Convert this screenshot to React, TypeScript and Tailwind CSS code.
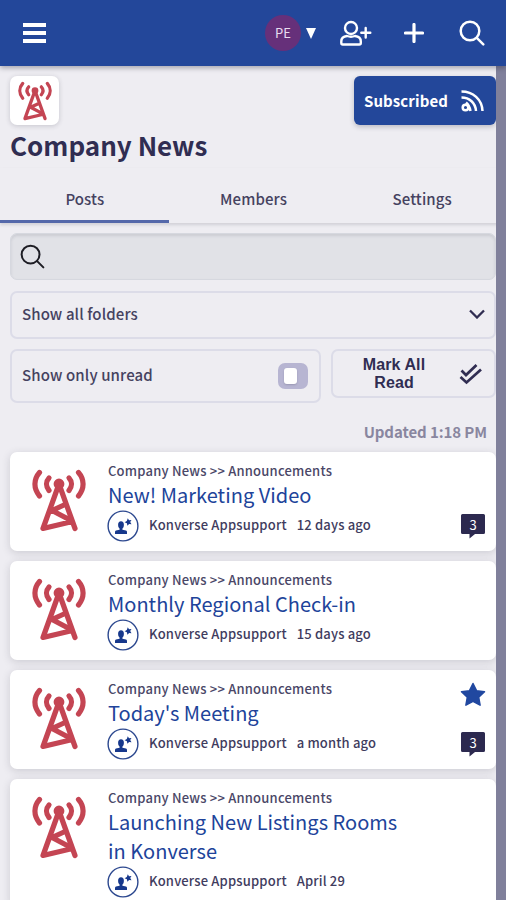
import React from "react";

type Post = {
  title: string[];
  date: string;
  starred?: boolean;
  comments?: number;
};

const posts: Post[] = [
  { title: ["New! Marketing Video"], date: "12 days ago", comments: 3 },
  { title: ["Monthly Regional Check-in"], date: "15 days ago" },
  { title: ["Today's Meeting"], date: "a month ago", starred: true, comments: 3 },
  { title: ["Launching New Listings Rooms", "in Konverse"], date: "April 29" },
];

function Tower({ className }: { className: string }) {
  return (
    <svg viewBox="0 0 54 63" className={className} fill="none" stroke="#c44553" strokeWidth="5.200" strokeLinecap="round" strokeLinejoin="round">
      <path d="M7.500 3.500C1.400 10.500 1.400 19.500 7.500 27M46.500 3.500C52.600 10.500 52.600 19.500 46.500 27" />
      <path d="M17 9C13.700 12.500 13.700 17.500 17 21.500M37 9C40.300 12.500 40.300 17.500 37 21.500" />
      <path d="M27 15L11 59.500L40.500 52.500M27 15L43 59.500M33 35.500L20 41.500L39 51.500" />
      <circle cx="27" cy="15" r="2.800" fill="#c44553" />
    </svg>
  );
}

function SearchIcon({ className, width }: { className: string; width: number }) {
  return (
    <svg viewBox="0 0 26 26" className={className} fill="none" stroke="currentColor" strokeWidth={width} strokeLinecap="round">
      <circle cx="11" cy="11" r="9.300" />
      <path d="M17.800 17.800L24.300 24.300" />
    </svg>
  );
}

function Avatar() {
  return (
    <svg viewBox="0 0 32 32" className="h-8 w-8 shrink-0" fill="#17388c">
      <circle cx="16" cy="16" r="14.900" fill="#fff" stroke="#2c488f" strokeWidth="1.400" />
      <ellipse cx="14" cy="15" rx="2.900" ry="3.700" />
      <path d="M12.600 17h2.800v2.800l3.600.8q1 .4 1 1.500v1.900H8v-1.900q0-1.100 1-1.500l3.600-.8z" />
      <path d="M20.800 8.200l1.200 2.100 2.500-.3-1.300 2.100 1.300 2.100-2.400-.3-1.700 1.800-.5-2.400-2.300-1 2.200-1.200z" />
    </svg>
  );
}

function CommentBadge({ count }: { count: number }) {
  return (
    <div className="relative h-[25px] w-6">
      <svg viewBox="0 0 24 25" className="h-[25px] w-6" fill="#2c294f">
        <path d="M1.500 0h21Q24 0 24 1.500V18.500Q24 20 22.500 20H14L8.500 24.500V20H1.500Q0 20 0 18.500V1.500Q0 0 1.500 0Z" />
      </svg>
      <span className="absolute inset-x-0 top-0 text-center text-[13px] leading-[21px] text-white">{count}</span>
    </div>
  );
}

function PostCard({ post }: { post: Post }) {
  return (
    <article className="flex min-h-[99px] shrink-0 rounded-[7px] bg-white shadow-[0_2px_8px_rgba(40,40,60,0.17)]">
      <Tower className="ml-[22px] mt-[17px] h-[63px] w-[54px] shrink-0" />
      <div className="ml-[22px] flex-1 pb-[9px] pt-[10px]">
        <p className="text-[13px] font-medium leading-[17px] tracking-[0.21px] text-[#4a4767]">Company News &gt;&gt; Announcements</p>
        <h2 className="mt-[1px] text-[20px] leading-[29px] tracking-[0.02px] text-[#20439a]">
          {post.title.map((line) => (
            <span key={line} className="block whitespace-nowrap">{line}</span>
          ))}
        </h2>
        <div className="-ml-[1px] mt-[1px] flex items-center text-[13px] font-medium text-[#3f3c5e]">
          <Avatar />
          <span className="ml-[10px] pb-[2px] leading-4 tracking-[0.18px]">Konverse Appsupport</span>
          <span className="ml-[10px] pb-[2px] leading-4 tracking-[0.16px]">{post.date}</span>
        </div>
      </div>
      <div className="mr-[11px] flex w-6 flex-col pt-3">
        <div className="h-[50px]">
          {post.starred && (
            <svg viewBox="0 0 26 26" className="-ml-[1px] h-[26px] w-[26px]" fill="#2148a0" stroke="#2148a0" strokeWidth="1.500" strokeLinejoin="round">
              <path d="M13 1.500l3.500 7.200 8 1.100-5.800 5.500 1.400 7.900L13 19.400l-7.100 3.800 1.400-7.900L1.500 9.800l8-1.100z" />
            </svg>
          )}
        </div>
        {post.comments && <CommentBadge count={post.comments} />}
      </div>
    </article>
  );
}

export default function App() {
  return (
    <div className="relative flex h-[900px] w-[506px] flex-col overflow-hidden bg-[#eeedf2] font-['Noto_Sans_CJK_SC','Noto_Sans',sans-serif] text-[#454260]">
      <header className="z-20 flex h-[66px] shrink-0 items-center bg-[#23479a] text-white shadow-[0_2px_5px_rgba(30,30,50,0.35)]">
        <div className="ml-[23px] flex w-[23px] flex-col gap-[4px]">
          <i className="h-[4px] bg-white" />
          <i className="h-[4px] bg-white" />
          <i className="h-[4px] bg-white" />
        </div>
        <div className="ml-[219px] flex h-9 w-9 items-center justify-center rounded-full bg-[#66307a] text-[13px] text-[#e8dcf0]">PE</div>
        <svg viewBox="0 0 10 11" className="ml-[5px] h-[11px] w-[10px]" fill="white">
          <path d="M0 0H10L5 11Z" />
        </svg>
        <svg viewBox="0 0 32 26" className="ml-[24px] h-[26px] w-8" fill="none" stroke="white" strokeWidth="2.400" strokeLinecap="round" strokeLinejoin="round">
          <circle cx="11" cy="8" r="6" />
          <path d="M7 16Q11 17.500 15 16Q20.800 16.500 20.800 21.500V23Q20.800 24.500 19.300 24.500H2.800Q1.300 24.500 1.300 23V21.500Q1.300 16.500 7 16ZM25.700 8V17.500M21.300 12.800H30.300" />
        </svg>
        <svg viewBox="0 0 20 20" className="ml-[32px] h-5 w-5" stroke="white" strokeWidth="3.200" strokeLinecap="round">
          <path d="M10 1.500V18.500M1.500 10H18.500" />
        </svg>
        <SearchIcon className="ml-[35px] h-[26px] w-[26px]" width={2.5} />
      </header>

      <section className="flex h-[59px] shrink-0 items-end justify-between px-[10px]">
        <div className="flex h-[49px] w-[49px] items-center justify-center rounded-[7px] bg-white shadow-[0_1px_5px_rgba(40,40,60,0.2)]">
          <Tower className="h-[40px] w-[34px]" />
        </div>
        <button className="flex h-[49px] w-[142px] items-center rounded-[6px] bg-[#23479a] pl-[10px] pt-[1px] text-[15px] font-bold text-white shadow-[0_2px_5px_rgba(40,40,60,0.25)]">
          <span className="w-[85px] text-left tracking-[0.1px]">Subscribed</span>
          <svg viewBox="0 0 24 24" className="ml-[11px] h-6 w-6" fill="none" stroke="white" strokeWidth="2.500">
            <circle cx="5.500" cy="18.500" r="2.800" />
            <path d="M1.500 2.500C13 2.500 22 10.500 22.500 22M1.500 8.500C9.500 8.500 15.500 14 16 22M6 13.500Q9.500 16.500 10.500 22" />
          </svg>
        </button>
      </section>
      <h1 className="h-[43px] shrink-0 pl-[10px] text-[26px] font-bold leading-[39px] text-[#302d52]">Company News</h1>

      <nav className="grid h-[55px] shrink-0 grid-cols-3 text-center text-[15px] font-medium leading-[61px] tracking-[0.1px] shadow-[0_2px_3px_rgba(40,40,60,0.15)]">
        <span className="h-[55px] border-b-[3px] border-[#5468aa] pl-px">Posts</span>
        <span className="h-[55px] pl-px">Members</span>
        <span className="h-[55px] pl-px">Settings</span>
      </nav>

      <main className="flex flex-1 flex-col px-[10px]">
        <div className="mt-[10px] flex h-[47px] shrink-0 items-center rounded-[7px] border border-[#d6d8df] bg-[#e1e2e7] pb-px pl-[9px] text-[#1d1d24] shadow-[inset_0_2px_3px_rgba(50,50,70,0.12)]">
          <SearchIcon className="h-[25px] w-[25px]" width={2.1} />
        </div>
        <div className="mt-[11px] flex h-[48px] shrink-0 items-center justify-between rounded-[7px] border-2 border-[#dcdce8] pb-[2px] pl-[10px] pr-[9px] text-[15px] font-medium">
          <span className="tracking-[0.1px]">Show all folders</span>
          <svg viewBox="0 0 16 10" className="h-[10px] w-4" fill="none" stroke="#302d52" strokeWidth="2.300">
            <path d="M1 1.500L8 8.500L15 1.500" />
          </svg>
        </div>
        <div className="mt-[10px] flex shrink-0 items-start gap-[10px]">
          <div className="flex h-[54px] w-[311px] items-center justify-between rounded-[7px] border-2 border-[#dcdce8] pl-[10px] pr-[11px] text-[15px] font-medium">
            <span className="pb-[2px] tracking-[0.12px]">Show only unread</span>
            <span className="flex h-[26px] w-[30px] items-center rounded-[7px] bg-[#b7b5d2] pl-[6px]">
              <i className="h-4 w-[13px] rounded-[3px] bg-white shadow-[0_1px_2px_rgba(40,40,60,0.2)]" />
            </span>
          </div>
          <button className="flex h-[49px] w-[165px] items-center rounded-[7px] border-2 border-[#dcdce8] font-['Liberation_Sans',sans-serif] text-[16px] font-bold leading-[18px] text-[#302d52]">
            <span className="ml-[27px] w-[68px] whitespace-nowrap tracking-[0.1px]">Mark All<br />Read</span>
            <svg viewBox="0 0 24 22" className="ml-[31px] h-[22px] w-6" fill="none" stroke="#302d52" strokeWidth="2.700">
              <path d="M2.500 7.500L7 12L17.500 2M1.500 14L7.500 19.500L22 6.500" />
            </svg>
          </button>
        </div>
        <p className="h-[49px] shrink-0 pr-[9px] text-right text-[15px] font-bold leading-[58px] tracking-[-0.08px] text-[#89869f]">Updated 1:18 PM</p>
        <div className="flex flex-col gap-[10px]">
          {posts.map((post) => (
            <PostCard key={post.title[0]} post={post} />
          ))}
        </div>
      </main>
      <div className="absolute bottom-0 right-0 top-[66px] z-10 w-[10px] bg-[#80809b]" />
    </div>
  );
}
